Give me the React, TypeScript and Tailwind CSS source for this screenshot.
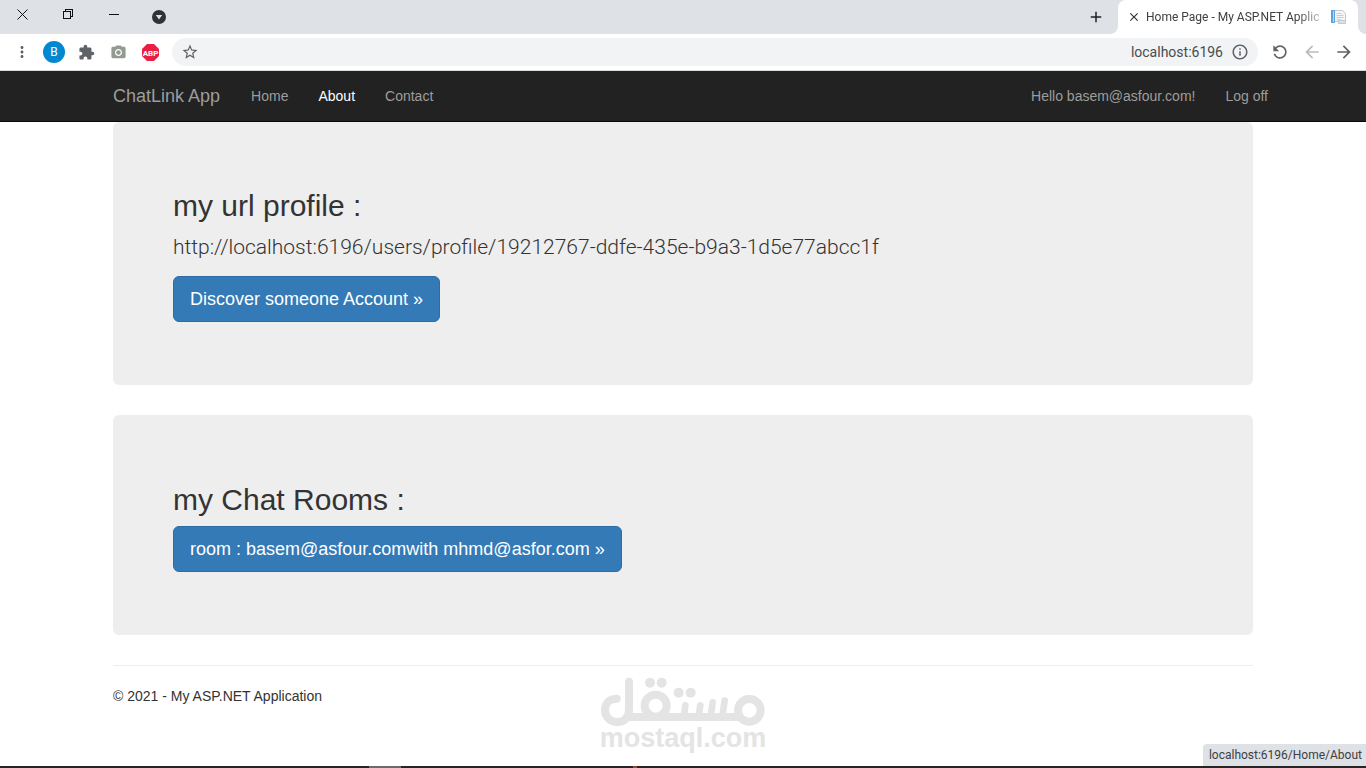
import { useState } from "react";
import {
  MdAdd,
  MdArrowBack,
  MdArrowForward,
  MdCameraAlt,
  MdClose,
  MdExtension,
  MdInfoOutline,
  MdMoreVert,
  MdRefresh,
  MdStarBorder,
} from "react-icons/md";

type NavItem = { label: string; href: string; active?: boolean };

const leftNav: NavItem[] = [
  { label: "Home", href: "#home" },
  { label: "About", href: "#about", active: true },
  { label: "Contact", href: "#contact" },
];

const rightNav: NavItem[] = [
  { label: "Hello basem@asfour.com!", href: "#manage" },
  { label: "Log off", href: "#logoff" },
];

const profileUrl =
  "http://localhost:6196/users/profile/19212767-ddfe-435e-b9a3-1d5e77abcc1f";

const windowButton = "flex h-7 w-[46px] items-center justify-center";
const toolButton = "flex h-8 w-8 items-center justify-center";

function TabStrip() {
  return (
    <div className="flex h-[34px] items-start justify-between bg-[#dee1e6] pr-2">
      <div className="flex">
        <button className={windowButton} aria-label="Close window">
          <svg width="12" height="11" viewBox="0 0 12 11" stroke="#111" fill="none">
            <path d="M.5.5l10 10M10.5.5l-10 10" />
          </svg>
        </button>
        <button className={windowButton} aria-label="Restore window">
          <svg width="12" height="10" viewBox="0 0 12 10" stroke="#111" fill="none" shapeRendering="crispEdges">
            <path d="M.5 2.5h7v7h-7zM2.5 2.5v-2h7v7h-2" />
          </svg>
        </button>
        <button className={windowButton} aria-label="Minimize window">
          <svg width="12" height="10" viewBox="0 0 12 10" stroke="#111" fill="none" shapeRendering="crispEdges">
            <path d="M0 5.5h10" />
          </svg>
        </button>
        <button className="flex h-[34px] w-[42px] items-center justify-center" aria-label="Search tabs">
          <svg width="14" height="14" viewBox="0 0 14 14">
            <circle cx="7" cy="7" r="7" fill="#303134" />
            <path d="M3.8 5h6.4L7 9.6z" fill="#dee1e6" />
          </svg>
        </button>
      </div>

      <div className="flex h-[34px] items-center">
        <button className="flex h-8 w-11 items-center justify-center text-[#202124]" aria-label="New tab">
          <MdAdd size={18} />
        </button>
        <div className="relative flex h-full w-[240px] items-center rounded-t-lg bg-white px-[9px]">
          <svg className="absolute bottom-0 -left-2" width="8" height="8" viewBox="0 0 8 8" fill="#fff">
            <path d="M8 0v8H0a8 8 0 0 0 8-8z" />
          </svg>
          <svg className="absolute -right-2 bottom-0" width="8" height="8" viewBox="0 0 8 8" fill="#fff">
            <path d="M0 0v8h8a8 8 0 0 1-8-8z" />
          </svg>
          <button className="mr-[5px] text-[#303134]" aria-label="Close tab">
            <MdClose size={14} />
          </button>
          <span className="flex-1 text-[12px] whitespace-nowrap text-[#3c4043] [mask-image:linear-gradient(to_right,#000_82%,transparent)]">
            Home Page - My ASP.NET Applic
          </span>
          <svg width="19" height="16" viewBox="0 0 19 16" fill="none">
            <path d="M4.5 1.5h8l3 3v8h-11z" fill="#f3f5f7" stroke="#c3c8ce" />
            <path d="M6.5 4.5h5M6.5 6.5h7M6.5 8.5h7M6.5 10.5h4" stroke="#c9ced5" />
            <path d="M1 1h4v13H1z" fill="#5fa3dd" />
            <path d="M3.5 2v11" stroke="#b7d8f3" />
            <path d="M8.5 11.5h7v3h-7z" fill="#dfe2e5" stroke="#c3c8ce" />
          </svg>
        </div>
      </div>
    </div>
  );
}

function Toolbar() {
  const [address, setAddress] = useState("localhost:6196");

  return (
    <div className="flex h-[37px] items-center border-b border-[#d5dadd] bg-white px-1.5 text-[#5f6368]">
      <button className={toolButton} aria-label="Menu">
        <MdMoreVert size={18} />
      </button>
      <button className={toolButton} aria-label="Profile">
        <span className="flex h-[22px] w-[22px] items-center justify-center rounded-full bg-[#0288d1] text-[12px] text-white">
          B
        </span>
      </button>
      <button className={toolButton} aria-label="Extensions">
        <MdExtension size={17} />
      </button>
      <button className={toolButton} aria-label="Screenshot">
        <MdCameraAlt size={17} color="#929a92" />
      </button>
      <button className={toolButton} aria-label="Adblock Plus">
        <svg width="17" height="17" viewBox="0 0 17 17">
          <path d="M5 0h7l5 5v7l-5 5H5l-5-5V5z" fill="#ed1e45" />
          <text
            x="8.5"
            y="11.5"
            textAnchor="middle"
            fontSize="8"
            fontWeight="bold"
            fontFamily="Roboto, sans-serif"
            fill="#fff"
          >
            ABP
          </text>
        </svg>
      </button>
      <div className="mx-1.5 flex h-7 flex-1 items-center rounded-full bg-[#f1f3f4] px-[9px]">
        <button aria-label="Bookmark this page">
          <MdStarBorder size={18} />
        </button>
        <input
          className="min-w-0 flex-1 bg-transparent text-right text-[14px] text-[#474b4f] outline-none"
          aria-label="Address"
          value={address}
          onChange={(e) => setAddress(e.target.value)}
        />
        <button className="ml-2" aria-label="Site information">
          <MdInfoOutline size={18} />
        </button>
      </div>
      <button className={toolButton} aria-label="Reload">
        <MdRefresh size={20} className="-scale-x-100" />
      </button>
      <button className={toolButton} aria-label="Forward">
        <MdArrowBack size={20} color="#bdb9bd" />
      </button>
      <button className={toolButton} aria-label="Back">
        <MdArrowForward size={20} />
      </button>
    </div>
  );
}

function NavList({ items, className = "" }: { items: NavItem[]; className?: string }) {
  return (
    <ul className={`flex ${className}`}>
      {items.map((item) => (
        <li key={item.label}>
          <a
            href={item.href}
            className={`block px-[15px] py-[15px] text-[14px] leading-5 ${item.active ? "text-white" : "text-[#9d9d9d]"}`}
          >
            {item.label}
          </a>
        </li>
      ))}
    </ul>
  );
}

function Navbar() {
  return (
    <nav className="border-b border-[#080808] bg-[#222]">
      <div className="mx-auto flex max-w-[1170px] px-[15px]">
        <a href="#top" className="py-[15px] pr-4 text-[18px] leading-5 text-[#9d9d9d]">
          ChatLink App
        </a>
        <NavList items={leftNav} />
        <NavList items={rightNav} className="-mr-[30px] ml-auto" />
      </div>
    </nav>
  );
}

function PrimaryLink({ href, children }: { href: string; children: string }) {
  return (
    <a
      href={href}
      className="inline-block rounded-md border border-[#2e6da4] bg-[#337ab7] px-4 py-[10px] text-[18px] leading-6 text-white"
    >
      {children}
    </a>
  );
}

function MostaqlLogo() {
  return (
    <div className="pointer-events-none absolute bottom-[19px] left-1/2 flex w-[168px] -translate-x-1/2 flex-col items-center text-[#e4e4e4]">
      <svg width="166" height="50" viewBox="30 34 498 150" fill="none" stroke="currentColor" strokeWidth="24" strokeLinecap="round">
        <path d="M80 99C55 99 45 117 45 133c0 22 17 36 37 36 21 0 35-14 35-38V48" />
        <path d="M112 154H456" strokeLinecap="butt" />
        <circle cx="197" cy="120" r="33" />
        <path d="M286 119l-4 32M331 119l-5 32M368 110l-6 41M404 105l-7 46" strokeWidth="20" />
        <circle cx="478" cy="134" r="34" />
        <g fill="currentColor" stroke="none">
          <circle cx="180" cy="51" r="15" />
          <circle cx="215" cy="51" r="15" />
          <circle cx="266" cy="81" r="15" />
          <circle cx="302" cy="81" r="15" />
        </g>
      </svg>
      <span className="text-[27px] leading-[22px] font-bold">mostaql.com</span>
    </div>
  );
}

export default function App() {
  return (
    <div className="relative flex min-h-screen flex-col bg-white font-['Liberation_Sans',Arial,sans-serif] text-[#333]">
      <header className="font-[Roboto,sans-serif]">
        <TabStrip />
        <Toolbar />
      </header>
      <Navbar />

      <div className="mx-auto w-full max-w-[1170px] px-[15px]">
        <main>
          <section className="mb-[30px] rounded-md bg-[#eee] px-[60px] pt-[67px] pb-[63px]">
            <h2 className="mb-[10px] text-[30px] leading-[33px]">my url profile :</h2>
            <p className="mb-[14px] font-[Roboto,sans-serif] text-[21px] leading-[30px] font-light">{profileUrl}</p>
            <PrimaryLink href="#discover">Discover someone Account »</PrimaryLink>
          </section>

          <section className="mb-[30px] rounded-md bg-[#eee] px-[60px] pt-[68px] pb-[63px]">
            <h2 className="mb-[10px] text-[30px] leading-[33px]">my Chat Rooms :</h2>
            <PrimaryLink href="#room">room : basem@asfour.comwith mhmd@asfor.com »</PrimaryLink>
          </section>
        </main>

        <hr className="mb-5 border-[#eee]" />
        <footer>
          <p className="text-[14px] leading-5">© 2021 - My ASP.NET Application</p>
        </footer>
      </div>

      <MostaqlLogo />

      {/* link target shown by the browser on hover */}
      <div className="absolute right-0 bottom-0.5 rounded-tl bg-[#dee1e6] py-[3px] pr-1 pl-1.5 font-[Roboto,sans-serif] text-[12px] leading-4 text-[#3c4043]">
        localhost:6196/Home/About
      </div>
      <div className="mt-auto flex h-0.5 bg-[#252525]">
        <div className="ml-[27%] w-8 bg-[#6b6b6b]" />
        <div className="ml-[17%] w-1 bg-[#a0452f]" />
      </div>
    </div>
  );
}
